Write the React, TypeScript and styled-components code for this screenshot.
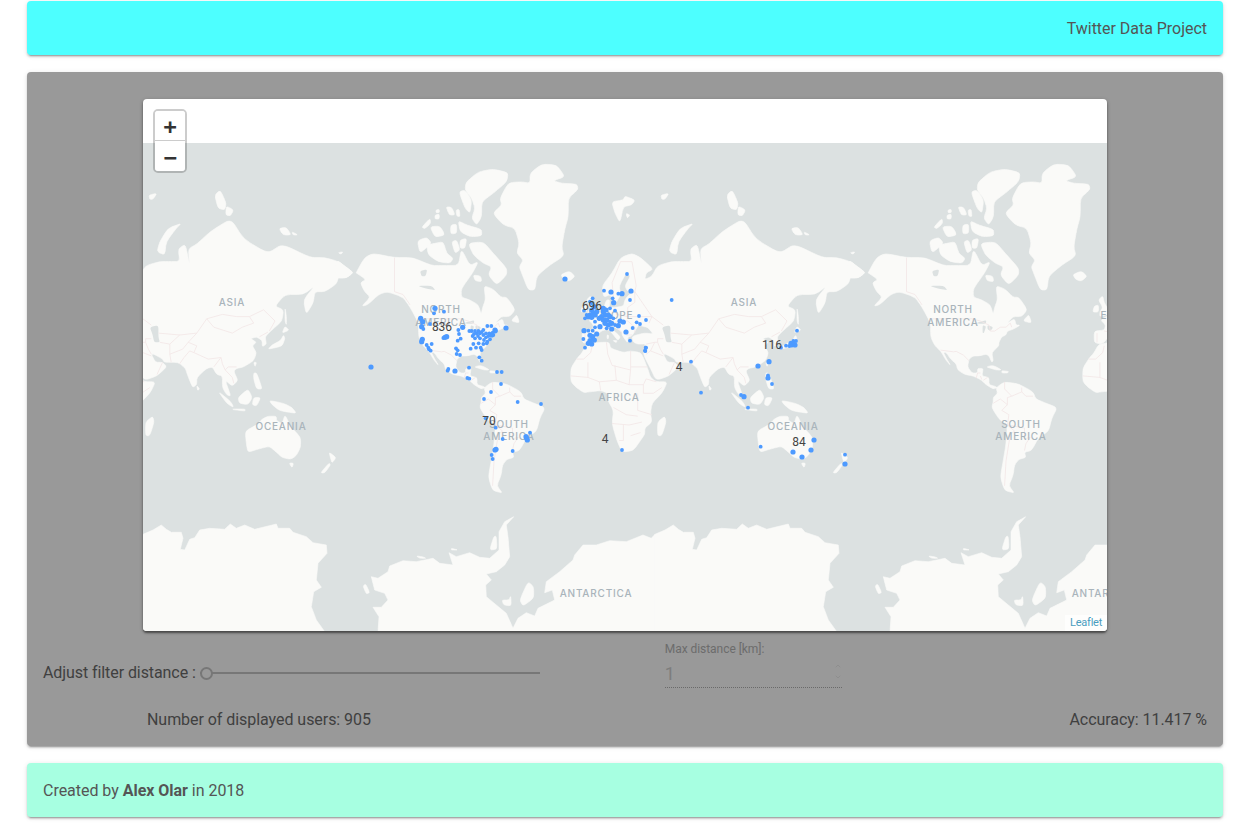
import React from "react";
import styled, { createGlobalStyle } from "styled-components";
import { ChevronDown, ChevronUp } from "lucide-react";

const GlobalStyle = createGlobalStyle`
  html, body { margin: 0; padding: 0; background: #fff; }
  body { font-family: Roboto, "Liberation Sans", sans-serif; font-size: 16px; }
`;

const cardShadow = "0 2px 2px 0 rgba(0,0,0,.14), 0 3px 1px -2px rgba(0,0,0,.2), 0 1px 5px 0 rgba(0,0,0,.12)";

const Page = styled.div`
  padding: 1px 19px 7px 27px;
  display: flex;
  flex-direction: column;
`;
const Bar = styled.div<{ $bg: string; $align?: string }>`
  height: 54px;
  box-sizing: border-box;
  background: ${(p) => p.$bg};
  border-radius: 4px;
  box-shadow: ${cardShadow};
  display: flex;
  align-items: center;
  justify-content: ${(p) => p.$align || "flex-start"};
  padding: 2px 16px 0;
  color: #555;
  line-height: 22px;
  letter-spacing: -0.03px;
`;
const Panel = styled.section`
  margin: 17px 0;
  height: 674px;
  box-sizing: border-box;
  padding-top: 27px;
  background: #999;
  border-radius: 4px;
  box-shadow: ${cardShadow};
  display: flex;
  flex-direction: column;
`;
const MapFrame = styled.div`
  position: relative;
  width: 964px;
  height: 532px;
  margin: 0 auto;
  background: #fff;
  border-radius: 4px;
  overflow: hidden;
  box-shadow: 0 2px 2px rgba(0,0,0,.45), 0 1px 4px rgba(0,0,0,.2);
`;
const MapSvg = styled.svg`
  display: block;
  width: 964px;
  height: 532px;
`;
const Zoom = styled.div`
  position: absolute;
  left: 10px;
  top: 10px;
  width: 30px;
  border: 2px solid rgba(0,0,0,.2);
  border-radius: 5px;
  display: flex;
  flex-direction: column;
`;
const ZoomBtn = styled.div<{ $last?: boolean }>`
  height: 30px;
  background: #fff;
  color: #333;
  text-align: center;
  font: bold 22px/${(p) => (p.$last ? "33px" : "32px")} "DejaVu Sans Mono", "Liberation Mono", monospace;
  overflow: hidden;
  border-bottom: ${(p) => (p.$last ? "none" : "1px solid #ccc")};
  box-sizing: ${(p) => (p.$last ? "content-box" : "border-box")};
  border-radius: ${(p) => (p.$last ? "0 0 3px 3px" : "3px 3px 0 0")};
`;
const Attribution = styled.div`
  position: absolute;
  right: 0;
  bottom: 0;
  padding: 0 5px;
  background: rgba(255,255,255,.7);
  color: #4a9dbf;
  font: 11px/16px Roboto, sans-serif;
  letter-spacing: -0.25px;
`;
const Controls = styled.div`
  display: flex;
  align-items: flex-start;
  padding: 11px 0 0 16px;
  height: 50px;
`;
const SliderLabel = styled.label`
  margin-top: 23px;
  line-height: 16px;
  color: #404040;
  white-space: nowrap;
  letter-spacing: -0.08px;
`;
const Slider = styled.input`
  appearance: none;
  -webkit-appearance: none;
  margin: 21px 0 0 4px;
  width: 340px;
  height: 20px;
  background: transparent;
  &::-webkit-slider-runnable-track { height: 2px; background: #777; }
  &::-webkit-slider-thumb {
    -webkit-appearance: none;
    width: 13px;
    height: 13px;
    margin-top: -5.5px;
    box-sizing: border-box;
    border: 2px solid #777;
    border-radius: 50%;
    background: #999;
  }
`;
const Field = styled.div`
  position: relative;
  width: 177px;
  margin-left: 125px;
`;
const FieldLabel = styled.div`
  font-size: 12px;
  line-height: 14px;
  color: #6c6c6c;
  letter-spacing: -0.05px;
`;
const FieldInput = styled.input`
  display: block;
  width: 100%;
  box-sizing: border-box;
  margin-top: 3px;
  height: 29px;
  padding: 0;
  border: 0;
  border-bottom: 1px dotted #6a6a6a;
  background: transparent;
  color: #7d7d7d;
  font: 18px Roboto, sans-serif;
  outline: none;
`;
const Spin = styled.div`
  position: absolute;
  right: 0;
  top: 20px;
  display: flex;
  flex-direction: column;
  color: #8a8a8a;
  gap: 3px;
`;
const Status = styled.div`
  display: flex;
  justify-content: space-between;
  padding: 17px 16px 0 120px;
  line-height: 22px;
  color: #404040;
  letter-spacing: -0.05px;
`;
const Bold = styled.b`
  font-weight: 700;
`;
const LandPath = styled.path`
  fill: #fafaf8;
  stroke: #fafaf8;
  stroke-width: 0.6;
  stroke-linejoin: round;
`;
const WaterPath = styled.path`
  fill: #dce1e1;
`;
const BorderPath = styled.path`
  fill: none;
  stroke: #f3e6e6;
  stroke-width: 0.8;
`;
const PlaceLabel = styled.text`
  font: 500 10px Inter, "Open Sans", sans-serif;
  letter-spacing: 0.8px;
  fill: #a9b4bb;
  text-anchor: middle;
`;
const CountLabel = styled.text`
  font: 12px Roboto, sans-serif;
  fill: #444;
  text-anchor: middle;
`;

type Pt = [number, number];
const merc = ([lon, lat]: Pt): Pt => [
  595 + (lon * 512) / 360,
  399 - 81.49 * Math.log(Math.tan(Math.PI / 4 + (lat * Math.PI) / 360)),
];
const z9 = (a: Pt): Pt => [360 + a[0] / 3, 150 + a[1] / 3];
const z7 = (a: Pt): Pt => [143 + a[0] / 3, 500 + a[1] / 3];
const z6 = (a: Pt): Pt => [143 + a[0] / 3, 140 + a[1] / 3];
const f = (n: number) => n.toFixed(1);
const d = (pts: Pt[], close = true) =>
  "M" + pts.map((p) => f(p[0]) + " " + f(p[1])).join("L") + (close ? "Z" : "");
const round = (pts: Pt[], t = 0.3) => {
  const n = pts.length;
  let s = "";
  pts.forEach((p, i) => {
    const a = pts[(i + n - 1) % n];
    const b = pts[(i + 1) % n];
    const ax = p[0] + (a[0] - p[0]) * t;
    const ay = p[1] + (a[1] - p[1]) * t;
    const bx = p[0] + (b[0] - p[0]) * t;
    const by = p[1] + (b[1] - p[1]) * t;
    s += `${i ? "L" : "M"}${f(ax)} ${f(ay)}Q${f(p[0])} ${f(p[1])} ${f(bx)} ${f(by)}`;
  });
  return s + "Z";
};

const geoLand: Pt[][] = [
  [[-168,66],[-162,70],[-156,71],[-141,70],[-128,70],[-115,68],[-108,68],[-96,68],[-94,72],[-88,68],[-82,69],[-86,66],[-94,61],[-94,58],[-88,57],[-82,55],[-80,51],[-79,54],[-77,57],[-78,62],[-72,61],[-66,58],[-62,58],[-56,53],[-60,50],[-66,50],[-70,47],[-65,49],[-64,46],[-61,46],[-66,44],[-70,43],[-71,41],[-74,40],[-76,37],[-76,35],[-81,31],[-80,26],[-81,25],[-83,29],[-85,30],[-90,29],[-94,29],[-97,27],[-98,22],[-95,18],[-91,18],[-91,21],[-87,21],[-88,16],[-83,15],[-83,10],[-79,9],[-77,8],[-80,7],[-85,10],[-88,13],[-94,16],[-100,17],[-105,20],[-106,24],[-110,27],[-113,31],[-115,31],[-112,26],[-110,23],[-113,26],[-117,32],[-121,35],[-124,40],[-124,47],[-130,54],[-135,58],[-146,60],[-152,59],[-160,55],[-164,54.5],[-158,58],[-162,60],[-165,63],[-161,64],[-168,66]],
  [[-59,48],[-53,47],[-55,51]],
  [[-85,22],[-80,23],[-74,20],[-78,20]],
  [[-74,19.5],[-69,19],[-70,18],[-74,18]],
  [[-24,65.5],[-18,66.5],[-14,65],[-18,63.5],[-22,64]],
  [[-5,50],[1,51],[1,53],[-2,56],[-3,58.5],[-6,57],[-3,54],[-5,52]],
  [[-10,52],[-6,52],[-6,55],[-9,54.5]],
  [[-78,8],[-72,12],[-62,10.5],[-52,5],[-50,0],[-44,-2.5],[-35,-6],[-39,-14],[-41,-22],[-48,-26],[-53,-34],[-58,-35],[-57,-38],[-62,-39],[-65,-42],[-66,-47],[-69,-52],[-65,-55],[-72,-54],[-75,-48],[-73,-40],[-71,-30],[-70,-18],[-76,-14],[-81,-6],[-80,-2],[-80,1],[-77,4]],
  [[-6,35.8],[3,37],[10,37],[11,33.5],[20,31],[25,32],[32,31],[34,28],[37,21],[39,15],[43,12],[51,12],[47,4],[40,-3],[39,-10],[40,-16],[35,-20],[35,-24],[32,-28],[27,-34],[19,-35],[15,-27],[12,-17],[13,-8],[9,-1],[9,4],[4,6],[-4,5],[-8,4.5],[-13,8],[-17,12],[-17,21],[-13,27],[-9,31]],
  [[44,-16],[49,-12],[50,-16],[47,-25],[44,-25]],
  [[-9,37],[-9,43],[-2,43.5],[-1,46],[-4.5,48.5],[2,51],[6,53.5],[8,57],[10.5,57],[10,54],[14,54],[20,54.5],[21,57],[24,59],[30,60],[23,60],[21,62],[25,65],[22,66],[17,62],[18,59],[15,56],[13,55.5],[11,59],[6,58],[5,62],[12,66],[18,70],[26,71],[32,70],[41,67],[36,66],[35,64],[40,65],[44,68],[54,69],[60,69],[68,69],[67,72],[72,73],[75,68],[74,72],[80,73],[90,75.5],[104,77.5],[113,74],[130,71],[140,73],[160,70],[170,70],[180,69],[180,65],[178,62.5],[170,60],[163,60],[162,56],[157,51],[155,57],[163,62],[155,59],[142,59],[135,54.5],[141,53],[140,48],[132,43],[128,40],[129,36],[126,34.5],[126,38],[122,40],[118,39],[122,37],[119,35],[122,31],[120,26],[113,22],[108,21],[106,19],[109,13],[105,9],[100,13],[104,2],[101,3],[98,8],[98,16],[94,17],[91,22],[87,21],[80,15],[80,10],[77,8],[73,18],[72,21],[67,25],[57,25],[56,27],[50,30],[48,30],[51,25],[56,25],[59,22],[52,16],[43,13],[39,21],[35,28],[34,31],[36,36],[30,36],[27,37],[26,40],[29,41],[35,42],[41,41.5],[37,45],[33,45.5],[31,46.5],[28,43],[26,40.5],[23,40],[23,36.5],[19,41],[19,42.5],[13,45.5],[12,44],[18,40],[16,38],[12,42],[9,44],[4,43],[0,39],[-2,37],[-5,36]],
  [[178,69.5],[187,67],[190,66],[185,64.5],[178,64.5]],
  [[-182,69.5],[-173,67],[-170,66],[-175,64.5],[-182,64.5]],
  [[142,54],[143,50],[143,46],[142,48]],
  [[130,33],[136,34],[140,35],[142,39],[141,41],[139,38],[133,35.5]],
  [[140,42],[145,43.5],[142,45.5]],
  [[120,25],[122,25],[121,22]],
  [[120,18],[122,18],[124,13],[126,7],[122,7],[120,14]],
  [[109,1],[116,7],[119,1],[116,-4],[110,-3]],
  [[95,5.5],[104,-2],[106,-6],[101,-3]],
  [[105,-7],[114,-7],[114,-8.5],[106,-7.5]],
  [[120,1],[125,1],[122,-5],[119,-4]],
  [[131,-1],[141,-3],[147,-6],[150,-10],[143,-9],[138,-8],[133,-4]],
  [[80,9.5],[82,7],[80.5,6]],
  [[114,-22],[122,-18],[126,-14],[130,-12],[136,-12],[136,-15],[140,-17],[142,-11],[146,-19],[153,-26],[153,-32],[150,-37],[146,-39],[140,-38],[136,-35],[131,-31.5],[124,-33],[116,-35],[115,-31]],
  [[145,-41],[148,-41],[147,-43.5]],
  [[173,-35],[178,-38],[175,-41],[174,-38]],
  [[173,-41],[174,-42],[170,-46],[167,-46]],
  [[8.5,41],[9.5,41],[9.5,39],[8.5,39]],
  [[12.5,38],[15.5,38],[15,36.7]],
];

const arcticLand: Pt[][] = [
  [[510,70],[545,42],[590,45],[615,80],[580,92],[605,100],[650,102],[655,118],[625,145],[625,200],[615,235],[605,290],[612,318],[570,345],[530,378],[525,420],[505,420],[485,370],[478,350],[490,330],[470,310],[478,280],[465,235],[430,225],[398,190],[425,165],[420,145],[445,98],[485,95],[510,100]],
  [[318,97],[355,65],[400,57],[445,68],[440,95],[400,130],[365,155],[365,200],[350,225],[335,205],[345,175],[335,145],[315,120]],
  [[297,125],[315,120],[335,150],[330,190],[315,175]],
  [[325,280],[370,275],[400,310],[440,355],[440,375],[410,405],[385,375],[395,350],[370,340],[340,315]],
  [[200,285],[225,280],[250,275],[260,310],[280,325],[270,340],[235,335],[205,315]],
  [[172,272],[200,262],[215,280],[180,310]],
  [[275,275],[290,270],[300,300],[285,310]],
  [[300,270],[320,265],[315,295],[300,295]],
  [[295,212],[320,225],[365,238],[365,258],[330,260],[300,245]],
  [[272,225],[290,222],[290,250],[272,252]],
  [[210,230],[240,228],[255,255],[225,262]],
  [[185,232],[210,205],[212,220],[195,236]],
  [[258,170],[275,172],[285,195],[268,195]],
  [[288,180],[298,178],[300,200],[290,198]],
  [[225,195],[238,192],[238,207],[225,207]],
  [[228,180],[238,178],[238,188],[228,188]],
  [[340,375],[362,378],[365,395],[345,392]],
  [[755,155],[790,150],[795,138],[825,150],[815,165],[790,170],[780,218],[765,190]],
  [[798,190],[810,195],[802,205]],
];

const russiaIslands: Pt[][] = [
  [[115,250],[75,265],[50,305],[42,335],[65,345],[70,305],[100,265]],
  [[215,165],[232,150],[250,190],[245,210],[225,205]],
  [[250,198],[272,210],[262,228],[248,225]],
  [[408,265],[430,262],[445,285],[420,285]],
  [[447,275],[465,285],[450,285]],
  [[585,338],[600,335],[595,343]],
  [[18,165],[42,160],[30,178],[20,178]],
];

const rawAntarctica: Pt[] = ([[0,103],[30,90],[55,75],[70,88],[85,97],[115,97],[120,115],[112,148],[125,150],[140,118],[155,113],[170,90],[200,85],[245,88],[262,72],[280,85],[305,75],[335,88],[400,72],[405,85],[440,85],[450,97],[490,110],[510,128],[550,135],[552,160],[525,190],[520,240],[535,262],[512,275],[505,320],[520,360],[545,395],[705,395],[708,350],[690,322],[715,322],[735,300],[725,280],[695,270],[685,230],[705,235],[735,215],[740,198],[780,182],[820,185],[870,175],[890,190],[930,195],[918,158],[940,170],[980,158],[1010,172],[1040,175],[1068,150],[1068,95],[1085,65],[1112,50],[1090,75],[1095,110],[1100,170],[1085,195],[1060,215],[1030,222],[1045,240],[1028,255],[1030,290],[1060,315],[1090,340],[1110,385],[1125,355],[1150,338],[1175,348],[1185,325],[1235,300],[1228,270],[1205,278],[1210,245],[1250,215],[1290,180],[1295,165],[1320,135],[1360,135],[1400,122],[1450,125],[1500,105],[1525,115],[1536,103],[1536,395],[0,395]] as Pt[]);
const antarcticIslands: Pt[][] = [
  [[660,258],[668,252],[680,278],[670,282]],
  [[1077,300],[1098,300],[1103,287],[1105,318],[1082,315]],
  [[1130,300],[1155,245],[1172,260],[1172,295],[1140,318]],
  [[1052,110],[1060,108],[1062,148],[1040,150]],
  [[925,145],[945,150],[925,150]],
  [[820,168],[830,175],[850,175],[838,170]],
];

const lakes: Pt[][] = [
  [[47,45],[53,46],[53,40],[54,37],[50,37],[49,41]],
  [[-92,47],[-85,48.5],[-85,46.7],[-90,46.7]],
  [[-87.5,46],[-85,45.5],[-86.5,42],[-87.5,42]],
  [[-84,46],[-80,45],[-82,43],[-84,44]],
  [[-125,62],[-115,62],[-112,60.5],[-118,61]],
  [[-123,66.5],[-118,67],[-119,65],[-122,65]],
];

const borders: Pt[][] = [
  [[-123,49],[-95,49],[-89,48],[-83,46],[-82,43],[-79,43],[-75,45],[-71,45],[-68,47],[-67,45]],
  [[-141,70],[-141,60],[-135,59],[-130,55]],
  [[-117,32.5],[-108,31.5],[-106,31.7],[-101,29.5],[-97,26]],
  [[-92,14.5],[-91,18],[-89,18]],[[-89,16],[-88,13.5]],[[-87,13],[-84,15]],
  [[-70,-18],[-58,-20],[-58,-27],[-54,-26],[-57,-30],[-58,-34]],
  [[-70,-18],[-69,-11],[-74,-8],[-70,-4],[-70,1],[-67,2],[-60,5],[-60,8]],
  [[-70,-18],[-65,-22],[-68,-24],[-71,-40],[-72,-52]],
  [[-80,-3],[-75,0],[-70,-4]],[[-72,12],[-72,7],[-67,2]],[[-60,5],[-57,2],[-52,2]],
  [[-13,27],[-8,27],[-3,31],[-2,35]],[[8,37],[9,30],[12,23],[25,20],[25,32]],[[25,22],[37,22]],
  [[25,20],[24,10],[15,13],[14,23]],[[4,6],[3,12],[15,13]],[[-17,16],[-5,15],[3,12]],[[-5,15],[-5,25]],
  [[24,10],[34,10],[36,14],[43,12]],[[34,10],[34,4],[41,4],[47,8]],[[30,4],[30,-8],[40,-11]],
  [[13,-6],[22,-11],[30,-12]],[[12,-17],[24,-18],[33,-16]],[[20,-18],[20,-28],[17,-28]],[[25,-25],[32,-23]],
  [[-2,43],[3,42.5]],[[-7,37],[-7,42]],[[3,50.5],[7,49],[7.5,47.5],[7,44]],[[6,53],[7,49]],
  [[7.5,47.5],[13,47],[17,48],[23,48],[28,45],[28,42]],[[14,54],[15,51],[23,50],[23,54],[28,56],[28,60]],
  [[23,50],[40,50],[38,47]],[[13,47],[19,42]],[[22,41],[26,41]],[[13,58],[12,63],[18,69],[26,69],[29,62],[28,60]],
  [[28,60],[40,50],[48,46]],[[53,42],[68,41],[80,42],[87,49]],[[87,49],[98,51],[108,50],[117,50],[127,53],[135,48],[131,43]],
  [[87,49],[92,45],[105,42],[112,45],[120,47],[117,50]],[[44,39],[48,39]],[[54,37],[61,36],[61,30],[62,25]],
  [[44,39],[44,37],[46,33],[48,30]],[[36,36],[42,37],[44,37]],[[42,37],[39,32],[36,30]],[[48,29],[39,32]],[[56,25],[52,17]],
  [[61,30],[70,33],[74,37],[80,35],[78,31],[88,27],[97,28],[92,22]],[[97,28],[98,24],[100,20],[102,22],[108,22]],
  [[100,20],[105,15],[106,11]],[[74,37],[80,42]],[[68,41],[61,36]],[[68,24],[71,28],[75,32],[78,31]],[[124,40],[130,42.5]],
];

const z2 = (x: number, y: number, big = 0): [number, number, number] => [380 + x / 3, 250 + y / 3, big];
const z10 = (x: number, y: number, big = 0): [number, number, number] => [570 + x / 3, 260 + y / 3, big];
const z5 = (x: number, y: number, big = 0): [number, number, number] => [680 + x / 3, 280 + y / 3, big];

const dots: [number, number, number][] = [
  [371, 367, 1], [565, 279, 1],
  ...([[165,175,1],[192,185],[162,190],[122,205,1],[128,215,1],[125,230,1],[130,237],[150,222],[248,232,1],[235,240],[237,252],[195,262,1],[200,260,1],[190,264],[242,266],[233,272],[127,268,1],[125,275,1],[140,285],[145,293],[155,282],[147,298],[152,302],[228,295],[233,301],[272,296],[288,293],[302,293],[305,300],[230,312],[240,315],[298,322],[305,332],[205,357],[203,362],[225,363,1],[267,353],[262,384],[268,386],[351,366],[365,366],[363,402],[333,426],[312,447],[413,456],[483,462],[378,234,1],[268,243],[275,243],[285,243],[295,243],[310,240],[322,228],[334,228],[345,240,1],[348,243],[335,255,1],[325,258],[318,262],[310,255],[300,250],[290,250],[278,258],[285,265],[300,265],[312,270],[322,275],[330,268],[340,255],[320,280],[310,282],[296,280],[280,282],[345,245],[305,246],[318,250],[328,250],[338,248],[282,252],[294,258],[317,505],[347,533],[368,567],[348,598,1],[345,600,1],[335,615],[338,627],[398,603],[438,560,1],[450,548],[442,570,1],[440,565,1],[726,600],[797,293],[795,302]] as number[][]).map((a) => z2(a[0], a[1], a[2])),
  ...([[171,42],[102,92],[123,96,1],[145,101],[156,101,1],[183,93,1],[128,115],[180,120],[131,128,1],[305,120],[135,152],[120,145],[68,115],[60,125],[42,152],[65,150,1],[70,160,1],[60,165,1],[75,165,1],[55,170,1],[65,172,1],[72,140,1],[66,130],[80,155,1],[100,155,1],[105,165,1],[95,170,1],[88,175,1],[108,150,1],[115,165,1],[100,145,1],[110,180,1],[120,170,1],[130,175],[207,168],[228,180],[200,187],[210,192],[150,183,1],[160,186,1],[125,190,1],[135,195],[115,195,1],[105,190,1],[90,200,1],[75,202],[145,197,1],[125,207,1],[110,205],[188,204],[168,216,1],[180,242],[228,263],[226,273],[42,212,1],[55,212],[68,212],[80,222,1],[60,226,1],[68,230,1],[40,237],[60,242,1],[73,240,1],[55,250,1],[65,252,1],[45,263],[75,185],[50,165],[45,175],[100,180,1],[120,185]] as number[][]).map((a) => z10(a[0], a[1], a[2])),
  ...([[33,245],[63,338],[351,152],[340,183],[348,183],[333,190,1],[318,197],[303,203],[328,198],[335,197],[345,195,1],[342,190],[267,245,1],[234,258,1],[264,286],[264,294,1],[276,312],[183,345],[192,350,1],[204,383],[242,500],[402,480,1],[339,516,1],[393,510,1],[366,531,1],[495,524],[495,552,1]] as number[][]).map((a) => z5(a[0], a[1], a[2])),
];

const places: [string, number, number][] = [
  ["ASIA", 232, 306], ["NORTH", 441, 313], ["AMERICA", 441, 326], ["OCEANIA", 281, 430],
  ["AFRICA", 619, 401], ["SOUTH", 509, 428], ["AMERICA", 509, 440], ["EUROPE", 611, 319],
  ["ANTARCTICA", 596, 597],
];
const counts: [string, number, number][] = [
  ["696", 592, 310], ["836", 442, 331], ["116", 772, 349], ["70", 489, 425],
  ["4", 679, 371], ["4", 605, 443], ["84", 799, 446],
];

const World = () => {
  const land = [
    ...geoLand.map((g) => round(g.map(merc))),
    ...arcticLand.map((g) => round(g.map(z9))),
    ...russiaIslands.map((g) => round(g.map(z6))),
    d(rawAntarctica.map(z7)),
    ...antarcticIslands.map((g) => round(g.map(z7))),
  ].join("");
  const water = lakes.map((g) => round(g.map(merc))).join("");
  const lines = borders.map((g) => d(g.map(merc), false)).join("");
  return (
    <MapSvg viewBox="143 99 964 532">
      <rect x="143" y="143" width="964" height="488" fill="#dce1e1" />
      {[-512, 0, 512].map((o) => (
        <g key={o} transform={`translate(${o} 0)`}>
          <LandPath d={land} />
          <WaterPath d={water} />
          <BorderPath d={lines} />
        </g>
      ))}
      {[0, 512].map((o) =>
        places.map(([t, x, y]) => (
          <PlaceLabel key={t + x + o} x={x + o} y={y}>{t}</PlaceLabel>
        ))
      )}
      {dots.map(([x, y, big], i) => (
        <circle key={i} cx={x} cy={y} r={big ? 2.6 : 1.9} fill="#4d9aff" />
      ))}
      {counts.map(([t, x, y]) => (
        <CountLabel key={t + x} x={x} y={y}>{t}</CountLabel>
      ))}
    </MapSvg>
  );
};

export default function App() {
  return (
    <>
      <GlobalStyle />
      <Page>
        <Bar $bg="#4dffff" $align="flex-end">Twitter Data Project</Bar>
        <Panel>
          <MapFrame>
            <World />
            <Zoom>
              <ZoomBtn>+</ZoomBtn>
              <ZoomBtn $last>−</ZoomBtn>
            </Zoom>
            <Attribution>Leaflet</Attribution>
          </MapFrame>
          <Controls>
            <SliderLabel>Adjust filter distance :</SliderLabel>
            <Slider type="range" min={1} max={100} defaultValue={1} />
            <Field>
              <FieldLabel>Max distance [km]:</FieldLabel>
              <FieldInput readOnly value="1" />
              <Spin>
                <ChevronUp size={8} />
                <ChevronDown size={8} />
              </Spin>
            </Field>
          </Controls>
          <Status>
            <span>Number of displayed users: 905</span>
            <span>Accuracy: 11.417 %</span>
          </Status>
        </Panel>
        <Bar $bg="#a7ffe1">
          <span>Created by <Bold>Alex Olar</Bold> in 2018</span>
        </Bar>
      </Page>
    </>
  );
}
